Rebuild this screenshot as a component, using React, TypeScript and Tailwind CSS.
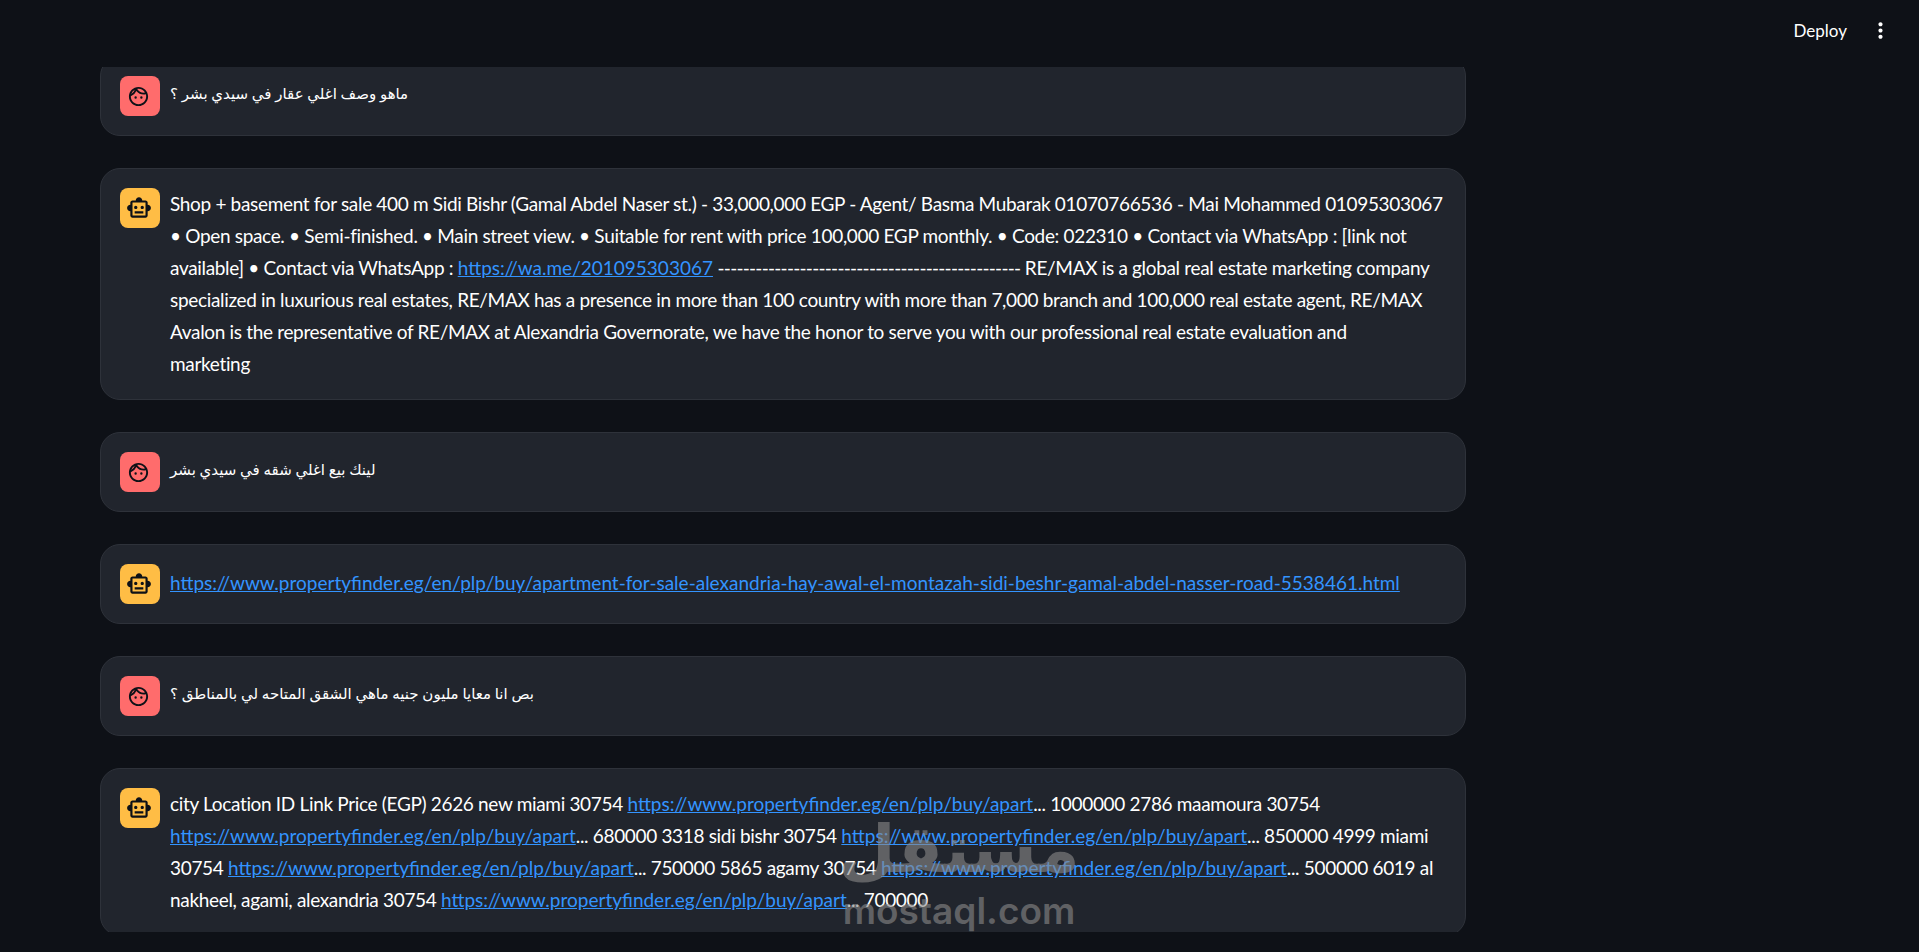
import React from 'react';
import { MdOutlineFace, MdOutlineSmartToy, MdMoreVert } from 'react-icons/md';

const Link: React.FC<{ href: string; children?: React.ReactNode }> = ({ href, children }) => (
    <a href={href} className="tracking-normal text-[#3394ff] underline">{children ?? href}</a>
);

const Short = () => <Link href="#">https://www.propertyfinder.eg/en/plp/buy/apart</Link>;

const Avatar: React.FC<{ role: 'user' | 'bot' }> = ({ role }) => (
    <div className={`flex h-10 w-10 shrink-0 items-center justify-center rounded-lg text-[#0e1117] ${role === 'user' ? 'bg-[#ff6c6c]' : 'bg-[#ffbd45]'}`}>
        {role === 'user' ? <MdOutlineFace className="-ml-[3px] mt-[1px] h-[23px] w-[23px]" /> : <MdOutlineSmartToy className="-ml-[2px] h-[26px] w-[26px]" />}
    </div>
);

const Message: React.FC<{ role: 'user' | 'bot'; children: React.ReactNode }> = ({ role, children }) => (
    <div className="flex shrink-0 gap-[10px] rounded-[20px] border border-[#2e323a] bg-[#21252d] p-[19px]">
        <Avatar role={role} />
        <div className="min-w-0 flex-1 whitespace-nowrap text-[19px] leading-8 tracking-[-0.33px] text-white">{children}</div>
    </div>
);

const Arabic: React.FC<{ children: React.ReactNode }> = ({ children }) => (
    <p dir="rtl" className="w-fit pt-[2px] font-['DejaVu_Sans',sans-serif] text-[15px] leading-8 tracking-normal [word-spacing:-1px]">{children}</p>
);

export default function App() {
    return (
        <div className="relative flex h-[952px] flex-col overflow-hidden bg-[#0e1117] font-['Lato',sans-serif]">
            {/* Top bar */}
            <header className="flex h-[67px] shrink-0 items-center justify-end pr-[26px] pb-[6px] text-white">
                <span className="text-[17px]">Deploy</span>
                <MdMoreVert className="ml-[21px] h-[25px] w-[25px]" />
            </header>

            {/* Chat */}
            <main className="h-[865px] shrink-0 overflow-hidden pl-[100px] pr-[453px]">
                <div className="-mt-[11px] flex flex-col gap-8">
                    <Message role="user">
                        <Arabic>ماهو وصف اغلي عقار في سيدي بشر ؟</Arabic>
                    </Message>
                    <Message role="bot">
                        Shop + basement for sale 400 m Sidi Bishr (Gamal Abdel Naser st.) - 33,000,000 EGP - Agent/ Basma Mubarak 01070766536 - Mai Mohammed 01095303067<br />
                        • Open space. • Semi-finished. • Main street view. • Suitable for rent with price 100,000 EGP monthly. • Code: 022310 • Contact via WhatsApp : [link not<br />
                        available] • Contact via WhatsApp : <Link href="https://wa.me/201095303067" /> <span className="tracking-[-0.75px]">------------------------------------------------</span> RE/MAX is a global real estate marketing company<br />
                        specialized in luxurious real estates, RE/MAX has a presence in more than 100 country with more than 7,000 branch and 100,000 real estate agent, RE/MAX<br />
                        Avalon is the representative of RE/MAX at Alexandria Governorate, we have the honor to serve you with our professional real estate evaluation and<br />
                        marketing
                    </Message>
                    <Message role="user">
                        <Arabic>لينك بيع اغلي شقه في سيدي بشر</Arabic>
                    </Message>
                    <Message role="bot">
                        <p className="pt-[3px]">
                            <Link href="https://www.propertyfinder.eg/en/plp/buy/apartment-for-sale-alexandria-hay-awal-el-montazah-sidi-beshr-gamal-abdel-nasser-road-5538461.html" />
                        </p>
                    </Message>
                    <Message role="user">
                        <Arabic>بص انا معايا مليون جنيه ماهي الشقق المتاحه لي بالمناطق ؟</Arabic>
                    </Message>
                    <Message role="bot">
                        city Location ID Link Price (EGP) 2626 new miami 30754 <Short />... 1000000 2786 maamoura 30754<br />
                        <Short />... 680000 3318 sidi bishr 30754 <Short />... 850000 4999 miami<br />
                        30754 <Short />... 750000 5865 agamy 30754 <Short />... 500000 6019 al<br />
                        nakheel, agami, alexandria 30754 <Short />... 700000
                    </Message>
                </div>
            </main>

            {/* Watermark */}
            <div className="pointer-events-none absolute left-[843px] top-[808px] flex w-[232px] flex-col items-center text-[#8a8a8a] opacity-60">
                <span dir="rtl" className="font-['DejaVu_Sans',sans-serif] text-[66px] font-bold leading-[84px]">مستقل</span>
                <span className="font-['Inter',sans-serif] text-[37px] font-semibold leading-[38px]">mostaql.com</span>
            </div>
        </div>
    );
}
